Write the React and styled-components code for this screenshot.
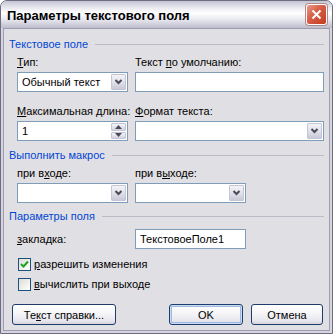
import React from 'react'
import styled, { createGlobalStyle } from 'styled-components'

const GlobalStyle = createGlobalStyle`
    body {
        margin: 0;
        background: #ffffff;
    }
`

const Window = styled.div`
    width: 333px;
    height: 334px;
    box-sizing: border-box;
    display: flex;
    flex-direction: column;
    border: 1px solid #6d6d80;
    border-radius: 7px 7px 0 0;
    background: #d6d5df;
    font-family: 'Liberation Sans', Arial, sans-serif;
    font-size: 11px;
    color: #000;
    overflow: hidden;
`

const TitleBar = styled.div`
    height: 27px;
    flex-shrink: 0;
    display: flex;
    align-items: center;
    justify-content: space-between;
    padding: 0 5px 0 6px;
    background: linear-gradient(to bottom, #c4c3d2 0%, #e9e9f0 25%, #ffffff 45%, #e6e6ee 70%, #bdbccc 100%);
`

const Title = styled.div`
    font-weight: bold;
    font-size: 13px;
    padding-top: 1px;
`

const CloseButton = styled.div`
    width: 19px;
    height: 19px;
    border: 1px solid #ffffff;
    border-radius: 3px;
    background: linear-gradient(135deg, #e99b88 0%, #d8604a 40%, #c43b22 100%);
    box-shadow: 0 0 0 1px #b08a8a;
    display: flex;
    align-items: center;
    justify-content: center;
`

const Body = styled.div`
    flex: 1;
    margin: 0 2px 2px;
    border: 1px solid #9d9cb0;
    background: #e0dfe3;
    padding: 5px 5px 0 5px;
    display: flex;
    flex-direction: column;
`

const GroupHeader = styled.div`
    display: flex;
    align-items: center;
    gap: 7px;
    color: #0046d5;
    height: 20px;
    flex-shrink: 0;
    margin-top: ${p => p.$top || 0}px;

    &::after {
        content: '';
        flex: 1;
        height: 1px;
        margin-top: 1px;
        background: #bdbcc6;
    }
`

const Grid = styled.div`
    display: grid;
    grid-template-columns: 111px 189px;
    column-gap: 7px;
    padding-left: 8px;
`

const Field = styled.div`
    display: flex;
    flex-direction: column;
    gap: 2px;
    margin-top: ${p => p.$top || 0}px;
`

const Label = styled.div`
    height: 16px;
    line-height: 16px;
    white-space: nowrap;
`

const Box = styled.div`
    box-sizing: border-box;
    width: ${p => p.$w ? p.$w + 'px' : '100%'};
    height: 20px;
    border: 1px solid #7f9db9;
    background: #fff;
    display: flex;
    align-items: center;
    padding: 1px;
`

const BoxText = styled.div`
    flex: 1;
    padding-left: 3px;
    white-space: nowrap;
`

const DropButton = styled.div`
    width: 15px;
    height: 16px;
    box-sizing: border-box;
    border: 1px solid #c6c5d5;
    border-radius: 1px;
    background: linear-gradient(to bottom, #f3f3f7 0%, #dfdfe8 55%, #c9c8d7 100%);
    display: flex;
    align-items: center;
    justify-content: center;
`

const Spin = styled.div`
    width: 15px;
    height: 16px;
    display: flex;
    flex-direction: column;
    gap: 1px;
`

const SpinHalf = styled.div`
    flex: 1;
    box-sizing: border-box;
    border: 1px solid #c6c5d5;
    border-radius: 1px;
    background: linear-gradient(to bottom, #f4f4f8, #d3d2df);
    display: flex;
    align-items: center;
    justify-content: center;
`

const Row = styled.div`
    display: flex;
    align-items: center;
    padding-left: 8px;
    margin-top: ${p => p.$top || 0}px;
`

const RowLabel = styled(Label)`
    width: 118px;
`

const Check = styled.div`
    display: flex;
    align-items: center;
    gap: 3px;
    padding-left: 9px;
    height: 20px;
    flex-shrink: 0;
    margin-top: ${p => p.$top || 0}px;
`

const CheckBox = styled.div`
    width: 13px;
    height: 13px;
    box-sizing: border-box;
    border: 1px solid #1c5180;
    background: linear-gradient(135deg, #dcdcd5 0%, #f2f2ee 60%, #ffffff 100%);
    display: flex;
    align-items: center;
    justify-content: center;
`

const Buttons = styled.div`
    display: flex;
    align-items: center;
    margin-top: 10px;
    padding-left: 3px;
`

const Button = styled.div`
    box-sizing: border-box;
    width: ${p => p.$w}px;
    height: 21px;
    border: 1px solid #1e3d6a;
    border-radius: 3px;
    background: linear-gradient(to bottom, #ffffff 0%, #f5f5f8 45%, #e6e5ec 85%, #d3d2dd 100%);
    display: flex;
    align-items: center;
    justify-content: center;
    box-shadow: ${p => p.$default ? 'inset 0 0 0 1px #c9dcf7, inset 0 0 0 2px #9fb9e3' : 'none'};
    margin-left: ${p => p.$left || 0}px;
`

const Chevron = () => (
    <svg width="9" height="6" viewBox="0 0 9 6">
        <path d="M1.5 1 L4.5 4 L7.5 1" stroke="#4a4a58" strokeWidth="2" fill="none" />
    </svg>
)

const Arrow = ({ up }) => (
    <svg width="7" height="4" viewBox="0 0 7 4">
        <path d={up ? 'M0 4 L3.5 0 L7 4 Z' : 'M0 0 L3.5 4 L7 0 Z'} fill="#4a4a58" />
    </svg>
)

const Select = ({ w, value }) => (
    <Box $w={w}>
        <BoxText>{value}</BoxText>
        <DropButton><Chevron /></DropButton>
    </Box>
)

const App = () => {
  return (
    <Window>
        <GlobalStyle />
        <TitleBar>
            <Title>Параметры текстового поля</Title>
            <CloseButton>
                <svg width="11" height="11" viewBox="0 0 11 11">
                    <path d="M1.5 1.5 L9.5 9.5 M9.5 1.5 L1.5 9.5" stroke="#fff" strokeWidth="2" />
                </svg>
            </CloseButton>
        </TitleBar>
        <Body>
            <GroupHeader>Текстовое поле</GroupHeader>
            <Grid>
                <Field>
                    <Label><u>Т</u>ип:</Label>
                    <Select value="Обычный текст" />
                </Field>
                <Field>
                    <Label>Текст <u>п</u>о умолчанию:</Label>
                    <Box><BoxText /></Box>
                </Field>
                <Field $top={11}>
                    <Label><u>М</u>аксимальная длина:</Label>
                    <Box>
                        <BoxText>1</BoxText>
                        <Spin>
                            <SpinHalf><Arrow up /></SpinHalf>
                            <SpinHalf><Arrow /></SpinHalf>
                        </Spin>
                    </Box>
                </Field>
                <Field $top={11}>
                    <Label><u>Ф</u>ормат текста:</Label>
                    <Select />
                </Field>
            </Grid>
            <GroupHeader $top={4}>Выполнить макрос</GroupHeader>
            <Grid>
                <Field>
                    <Label>при в<u>х</u>оде:</Label>
                    <Select />
                </Field>
                <Field>
                    <Label>при в<u>ы</u>ходе:</Label>
                    <Select w={111} />
                </Field>
            </Grid>
            <GroupHeader $top={3}>Параметры поля</GroupHeader>
            <Row $top={3}>
                <RowLabel><u>з</u>акладка:</RowLabel>
                <Box $w={111}><BoxText>ТекстовоеПоле1</BoxText></Box>
            </Row>
            <Check $top={5}>
                <CheckBox>
                    <svg width="9" height="9" viewBox="0 0 9 9">
                        <path d="M1 4 L3.5 6.5 L8 1.5" stroke="#21a121" strokeWidth="2" fill="none" />
                    </svg>
                </CheckBox>
                <span><u>р</u>азрешить изменения</span>
            </Check>
            <Check>
                <CheckBox />
                <span><u>в</u>ычислить при выходе</span>
            </Check>
            <Buttons>
                <Button $w={104}>Те<u>к</u>ст справки...</Button>
                <Button $w={74} $left={53} $default>OK</Button>
                <Button $w={72} $left={8}>Отмена</Button>
            </Buttons>
        </Body>
    </Window>
  )
}

export default App
